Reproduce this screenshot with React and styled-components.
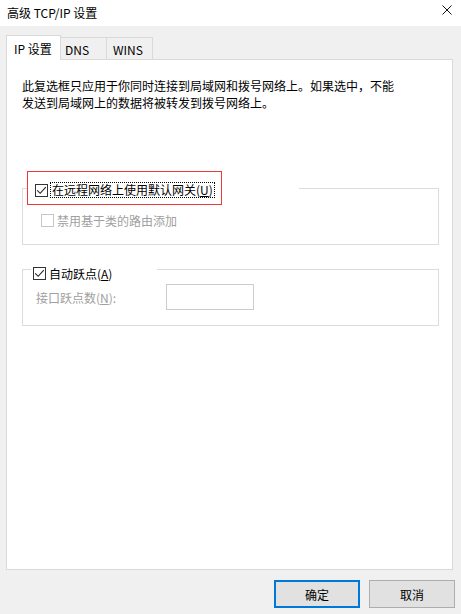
import React from 'react';
import styled, { createGlobalStyle } from 'styled-components';

const GlobalStyle = createGlobalStyle`
  html, body { margin: 0; padding: 0; }
  body {
    font-family: "Microsoft YaHei", "Noto Sans CJK SC", sans-serif;
    font-size: 12px;
    color: #000;
    background: #f0f0f0;
  }
  * { box-sizing: border-box; }
`;

const Window = styled.div`
  width: 461px;
  height: 614px;
  display: flex;
  flex-direction: column;
  background: #f0f0f0;
  overflow: hidden;
`;

const TitleBar = styled.div`
  flex: none;
  height: 26px;
  background: #fff;
  display: flex;
  align-items: flex-start;
  justify-content: space-between;
  padding-left: 7px;
`;

const Title = styled.div`
  margin-top: 4px;
  line-height: 17px;
`;

const CloseButton = styled.div`
  margin-top: 5px;
  margin-right: 9px;
  width: 10px;
  height: 10px;
  display: flex;
`;

const Body = styled.div`
  flex: 1;
  display: flex;
  flex-direction: column;
  padding: 9px 8px 0 6px;
`;

const TabStrip = styled.div`
  flex: none;
  height: 24px;
  display: flex;
  align-items: flex-end;
  position: relative;
  z-index: 1;
`;

const Tab = styled.div`
  width: ${p => p.$w}px;
  height: ${p => (p.$active ? 25 : 23)}px;
  margin-bottom: -1px;
  margin-left: ${p => (p.$first ? 0 : -1)}px;
  padding-left: ${p => p.$pl}px;
  padding-top: 1px;
  display: flex;
  align-items: center;
  line-height: 17px;
  background: ${p => (p.$active ? '#fff' : '#f0f0f0')};
  border: 1px solid #d9d9d9;
  border-bottom: ${p => (p.$active ? 'none' : '1px solid #d9d9d9')};
  position: relative;
  z-index: ${p => (p.$active ? 2 : 1)};
`;

const Panel = styled.div`
  flex: 1;
  background: #fff;
  border: 1px solid #d9d9d9;
  padding: 17px 13px 0 15px;
  display: flex;
  flex-direction: column;
`;

const Description = styled.p`
  margin: 0;
  width: 378px;
  line-height: 17px;
`;

const GroupBox = styled.div`
  position: relative;
  height: 57px;
  margin-top: ${p => p.$mt}px;
  border: 1px solid #dcdcdc;
  padding: ${p => p.$pad};
`;

const GroupHeader = styled.div`
  position: absolute;
  left: ${p => p.$left}px;
  top: ${p => p.$top}px;
  width: ${p => p.$w}px;
  background: #fff;
  display: flex;
  align-items: center;
`;

const HighlightFrame = styled.div`
  width: 195px;
  height: 34px;
  border: 1px solid #ec3a3a;
  padding: 4px 0 0 7px;
  display: flex;
  align-items: center;
`;

const CheckRow = styled.div`
  display: flex;
  align-items: center;
  height: 17px;
  gap: 3px;
  padding-left: ${p => p.$pl || 0}px;
  color: ${p => (p.$disabled ? '#a0a0a0' : '#000')};
  line-height: 17px;
  white-space: nowrap;
`;

const Box = styled.span`
  flex: none;
  width: 13px;
  height: 13px;
  border: 1px solid ${p => (p.$disabled ? '#c6c6c6' : '#333')};
  background: #fff;
  display: flex;
`;

const FocusLabel = styled.span`
  margin-left: 2px;
  padding: 0 1px;
  border: 1px dotted #000;
  line-height: 14px;
  white-space: nowrap;
`;

const Mnemonic = styled.span`
  text-decoration: underline;
  text-underline-offset: 1px;
`;

const FieldRow = styled.div`
  display: flex;
  align-items: center;
`;

const FieldLabel = styled.span`
  width: 130px;
  color: #a0a0a0;
  line-height: 17px;
`;

const NumberBox = styled.div`
  width: 88px;
  height: 26px;
  border: 1px solid #cccccc;
  background: #fff;
`;

const Footer = styled.div`
  flex: none;
  display: flex;
  justify-content: flex-end;
  gap: 9px;
  padding: 10px 6px 6px;
`;

const Button = styled.button`
  width: 86px;
  height: 28px;
  font: inherit;
  color: #000;
  background: #e1e1e1;
  border: ${p => (p.$default ? '2px solid #0078d7' : '1px solid #adadad')};
  padding: 0;
  line-height: 17px;
`;

const Check = ({ disabled }) => (
  <Box $disabled={disabled}>
    {!disabled && (
      <svg width="11" height="11" viewBox="0 0 11 11">
        <path d="M1.2 5.3 L4.2 8.3 L9.8 2.2" fill="none" stroke="#222" strokeWidth="1.1" />
      </svg>
    )}
  </Box>
);

export default function App() {
  return (
    <>
      <GlobalStyle />
      <Window>
        <TitleBar>
          <Title>高级 TCP/IP 设置</Title>
          <CloseButton>
            <svg width="10" height="10" viewBox="0 0 10 10">
              <path d="M0.5 0.5 L9.5 9.5 M9.5 0.5 L0.5 9.5" stroke="#111" strokeWidth="1" />
            </svg>
          </CloseButton>
        </TitleBar>
        <Body>
          <TabStrip>
            <Tab $active $first $w={55} $pl={7}>IP 设置</Tab>
            <Tab $w={47} $pl={4}>DNS</Tab>
            <Tab $w={47} $pl={6}>WINS</Tab>
          </TabStrip>
          <Panel>
            <Description>
              此复选框只应用于你同时连接到局域网和拨号网络上。如果选中，不能发送到局域网上的数据将被转发到拨号网络上。
            </Description>

            <GroupBox $mt={77} $pad="23px 0 0 18px">
              <GroupHeader $left={4} $top={-18} $w={272}>
                <HighlightFrame>
                  <Check />
                  <FocusLabel>
                    在远程网络上使用默认网关(<Mnemonic>U</Mnemonic>)
                  </FocusLabel>
                </HighlightFrame>
              </GroupHeader>
              <CheckRow $disabled>
                <Check disabled />
                <span>禁用基于类的路由添加</span>
              </CheckRow>
            </GroupBox>

            <GroupBox $mt={24} $pad="14px 0 0 13px">
              <GroupHeader $left={8} $top={-5} $w={126}>
                <CheckRow $pl={2}>
                  <Check />
                  <span>
                    自动跃点(<Mnemonic>A</Mnemonic>)
                  </span>
                </CheckRow>
              </GroupHeader>
              <FieldRow>
                <FieldLabel>
                  接口跃点数(<Mnemonic>N</Mnemonic>):
                </FieldLabel>
                <NumberBox />
              </FieldRow>
            </GroupBox>
          </Panel>
        </Body>
        <Footer>
          <Button $default>确定</Button>
          <Button>取消</Button>
        </Footer>
      </Window>
    </>
  );
}
